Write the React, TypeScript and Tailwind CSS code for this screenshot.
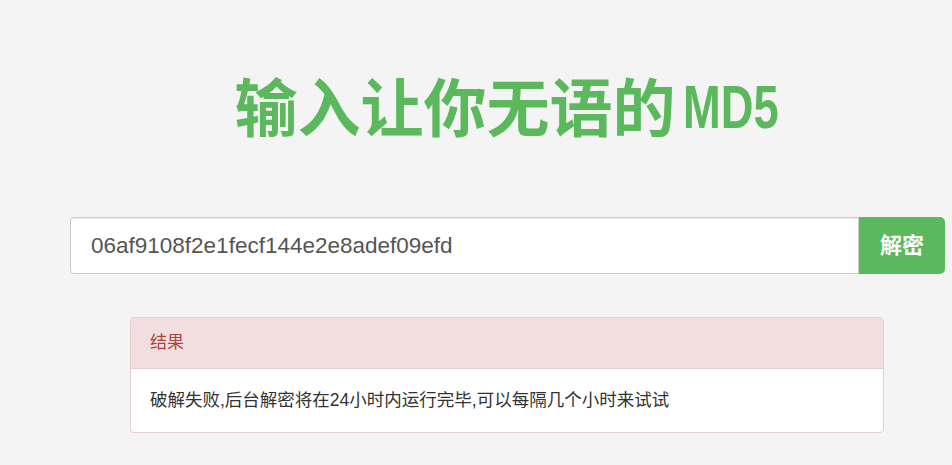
export default function App() {
  return (
    <div
      className="min-h-screen bg-[#f4f4f4] pl-[70px]"
      style={{ fontFamily: '"Liberation Sans", "Noto Sans CJK SC", sans-serif' }}
    >
      <div className="w-[875px]">
        {/* Title */}
        <div className="pt-[72px] h-[217px]">
          <h1
            className="flex h-[64px] items-baseline justify-center pr-[4px] text-[63px] leading-[64px] font-bold text-[#5cb85c]"
            style={{ fontFamily: '"Noto Sans CJK SC", sans-serif' }}
          >
            <span>输入让你无语的</span>
            <span className="ml-[7px] inline-block w-[94px] whitespace-nowrap">
              <span
                className="inline-block origin-left -translate-y-[3px] scale-x-[0.73] text-[62px]"
                style={{ fontFamily: '"Liberation Sans", sans-serif' }}
              >
                MD5
              </span>
            </span>
          </h1>
        </div>

        {/* Input group */}
        <div className="flex h-[57px]">
          <input
            readOnly
            value="06af9108f2e1fecf144e2e8adef09efd"
            className="flex-1 min-w-0 rounded-l-[4px] border border-[#cccccc] bg-white pl-[20px] text-[22.5px] text-[#555555] outline-none shadow-[inset_0_1px_1px_rgba(0,0,0,0.075)]"
          />
          <button className="w-[86px] rounded-r-[5px] bg-[#5cb85c] text-[22px] font-bold text-white">
            解密
          </button>
        </div>

        {/* Result panel */}
        <div className="mx-[60px] mt-[43px] w-[754px] overflow-hidden rounded-[4px] border border-[#ebccd1] bg-white">
          <div className="h-[51px] border-b border-[#ebccd1] bg-[#f2dede] px-[19px] text-[17px] leading-[50px] text-[#a94442]">
            结果
          </div>
          <div className="h-[63px] px-[19px] text-[17.5px] leading-[63px] text-[#333333]">
            破解失败,后台解密将在24小时内运行完毕,可以每隔几个小时来试试
          </div>
        </div>
      </div>
    </div>
  );
}
